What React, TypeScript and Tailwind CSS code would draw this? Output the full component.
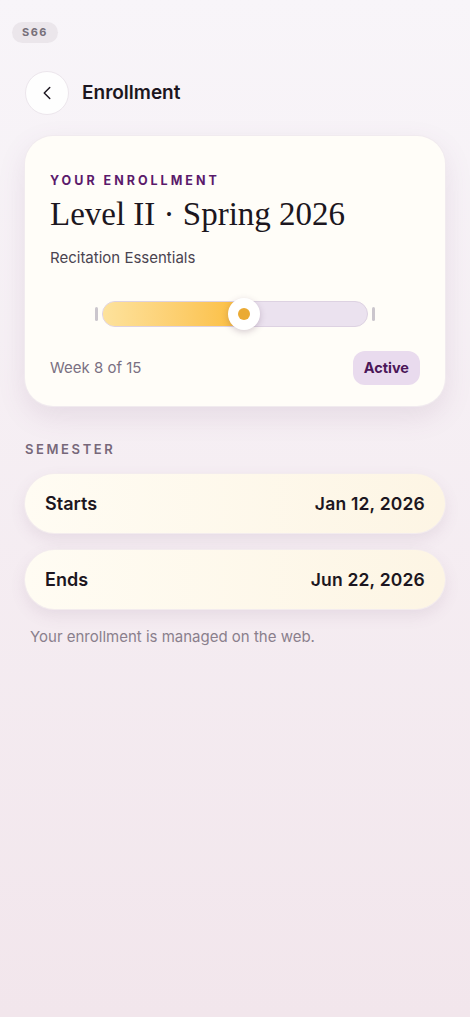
import { ChevronLeft } from "lucide-react";

const sans = "font-['Inter','Noto_Sans',sans-serif]";

function DateRow({ label, value }: { label: string; value: string }) {
  return (
    <div className="flex h-[59px] items-center justify-between rounded-[30px] bg-gradient-to-r from-[#fffcf3] to-[#fdf5e4] px-5 shadow-[0_6px_16px_rgba(120,80,120,0.12)] ring-1 ring-[#f3ecee]">
      <span className="text-[18px] font-semibold text-[#1c1620]">{label}</span>
      <span className="text-[17.5px] font-semibold tracking-[0.2px] text-[#1c1620]">{value}</span>
    </div>
  );
}

export default function App() {
  return (
    <main className={`${sans} min-h-[1017px] w-full bg-gradient-to-b from-[#f8f5f9] to-[#f2e6ec]`}>
      <div className="px-3 pt-[18px]">
        <span className="inline-flex h-[21px] items-center rounded-full bg-[#ebe6eb] px-[10px] text-[11px] font-bold tracking-[1.5px] text-[#77707a]">
          S66
        </span>
      </div>

      <div className="mt-7 flex items-center gap-[13px] px-[25px]">
        <button className="flex h-[44px] w-[44px] items-center justify-center rounded-full border border-[#ece6ec] bg-white/90">
          <ChevronLeft size={22} strokeWidth={1.6} className="text-[#1c1620]" />
        </button>
        <h1 className="text-[19px] font-semibold text-[#1c1620]">Enrollment</h1>
      </div>

      <div className="mx-[25px] mt-[21px] rounded-[28px] bg-[#fffdf8] px-[25px] pb-[21px] pt-[36px] shadow-[0_10px_28px_rgba(120,80,120,0.13)] ring-1 ring-[#f1ebef]">
        <p className="text-[12.5px] font-bold uppercase tracking-[3px] text-[#5b1a6b]">Your enrollment</p>
        <h2 className="mt-[3px] font-['Liberation_Serif',serif] text-[33px] leading-[40px] text-[#1c1620]">
          Level II · Spring 2026
        </h2>
        <p className="mt-[13px] text-[15px] text-[#4a4450]">Recitation Essentials</p>

        <div className="mt-[32px] flex items-center justify-center gap-[4px]">
          <div className="h-[14px] w-[3px] rounded-full bg-[#cbc6cd]" />
          <div className="relative h-[26px] w-[266px] rounded-full border border-[#ddd2e2] bg-[#ebe2ef]">
            <div className="h-full w-[142px] rounded-full bg-gradient-to-r from-[#fde29c] to-[#fbbd3a]" />
            <div className="absolute left-[125px] top-[-4px] flex h-[32px] w-[32px] items-center justify-center rounded-full bg-white shadow-[0_2px_6px_rgba(90,60,90,0.25)]">
              <div className="h-[12px] w-[12px] rounded-full bg-[#eaaa34]" />
            </div>
          </div>
          <div className="h-[14px] w-[3px] rounded-full bg-[#cbc6cd]" />
        </div>

        <div className="mt-[24px] flex items-center justify-between">
          <span className="text-[15px] text-[#7a7082]">Week 8 of 15</span>
          <span className="rounded-[12px] bg-[#e9dbee] px-[11px] py-[6px] text-[14.5px] font-bold text-[#4b1658]">Active</span>
        </div>
      </div>

      <p className="mt-[34px] px-[25px] text-[13px] font-semibold uppercase tracking-[2.6px] text-[#77687a]">Semester</p>

      <div className="mt-[15px] flex flex-col gap-[17px] px-[25px]">
        <DateRow label="Starts" value="Jan 12, 2026" />
        <DateRow label="Ends" value="Jun 22, 2026" />
      </div>

      <p className="mt-[17px] px-[30px] text-[15px] text-[#8a7f8c]">Your enrollment is managed on the web.</p>
    </main>
  );
}
